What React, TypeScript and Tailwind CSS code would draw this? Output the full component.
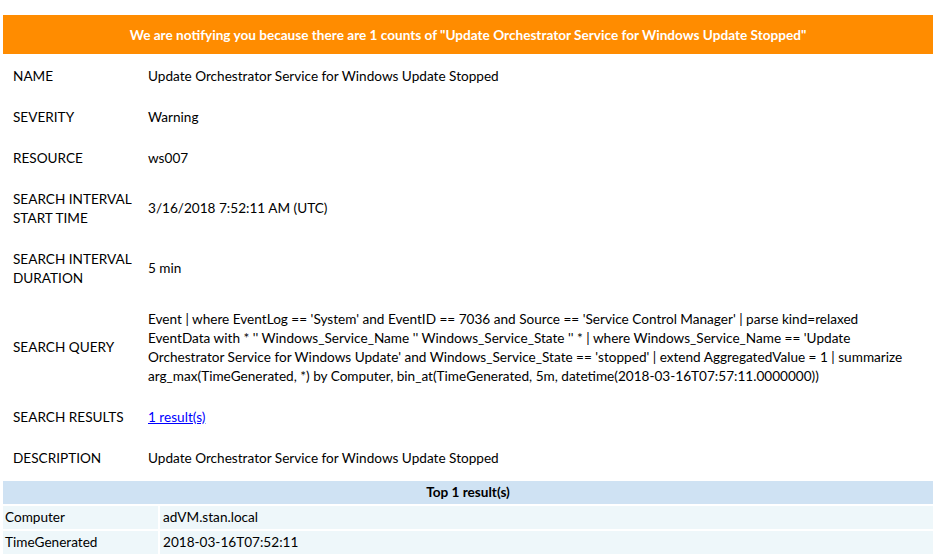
import React from 'react';

interface Field {
  label: React.ReactNode;
  value: React.ReactNode;
}

const fields: Field[] = [
  { label: 'NAME', value: 'Update Orchestrator Service for Windows Update Stopped' },
  { label: 'SEVERITY', value: 'Warning' },
  { label: 'RESOURCE', value: 'ws007' },
  {
    label: (<>SEARCH INTERVAL<br />START TIME</>),
    value: '3/16/2018 7:52:11 AM (UTC)',
  },
  {
    label: (<>SEARCH INTERVAL<br />DURATION</>),
    value: '5 min',
  },
  {
    label: 'SEARCH QUERY',
    value: (
      <>
        Event | where EventLog == 'System' and EventID == 7036 and Source == 'Service Control Manager' | parse kind=relaxed
        <br />
        EventData with * '' Windows_Service_Name '' Windows_Service_State '' * | where Windows_Service_Name == 'Update
        <br />
        Orchestrator Service for Windows Update' and Windows_Service_State == 'stopped' | extend AggregatedValue = 1 | summarize
        <br />
        arg_max(TimeGenerated, *) by Computer, bin_at(TimeGenerated, 5m, datetime(2018-03-16T07:57:11.0000000))
      </>
    ),
  },
  {
    label: 'SEARCH RESULTS',
    value: <a href="#" className="text-[#0000ff] underline">1 result(s)</a>,
  },
  { label: 'DESCRIPTION', value: 'Update Orchestrator Service for Windows Update Stopped' },
];

const results = [
  { key: 'Computer', value: 'adVM.stan.local' },
  { key: 'TimeGenerated', value: '2018-03-16T07:52:11' },
];

export default function App() {
  return (
    <div className="w-[946px] h-[555px] overflow-hidden bg-white pt-[15px] px-[3px] text-black text-[13.6px] leading-[19px] font-['Lato','Open_Sans',sans-serif]">
      <div className="w-[930px]">
        <div className="h-[39px] bg-[#ff8c00] flex items-center justify-center text-white font-bold pt-[1px]">
          We are notifying you because there are 1 counts of "Update Orchestrator Service for Windows Update Stopped"
        </div>

        <div className="pt-[1.5px]">
          {fields.map((f, i) => (
            <div key={i} className="flex items-center py-[11px]">
              <div className="w-[135px] pl-[10px] shrink-0 whitespace-nowrap">{f.label}</div>
              <div className="pl-[10px] whitespace-nowrap">{f.value}</div>
            </div>
          ))}
        </div>

        <div className="mt-[2.5px] flex flex-col gap-[2px]">
          <div className="h-[23px] bg-[#cfe2f3] flex items-center justify-center font-bold">
            Top 1 result(s)
          </div>
          {results.map(r => (
            <div key={r.key} className="flex gap-[2px] h-[23px]">
              <div className="w-[155px] bg-[#eef7fa] flex items-center pl-[2px]">{r.key}</div>
              <div className="flex-1 bg-[#eef7fa] flex items-center pl-[3px]">{r.value}</div>
            </div>
          ))}
        </div>
      </div>
    </div>
  );
}
